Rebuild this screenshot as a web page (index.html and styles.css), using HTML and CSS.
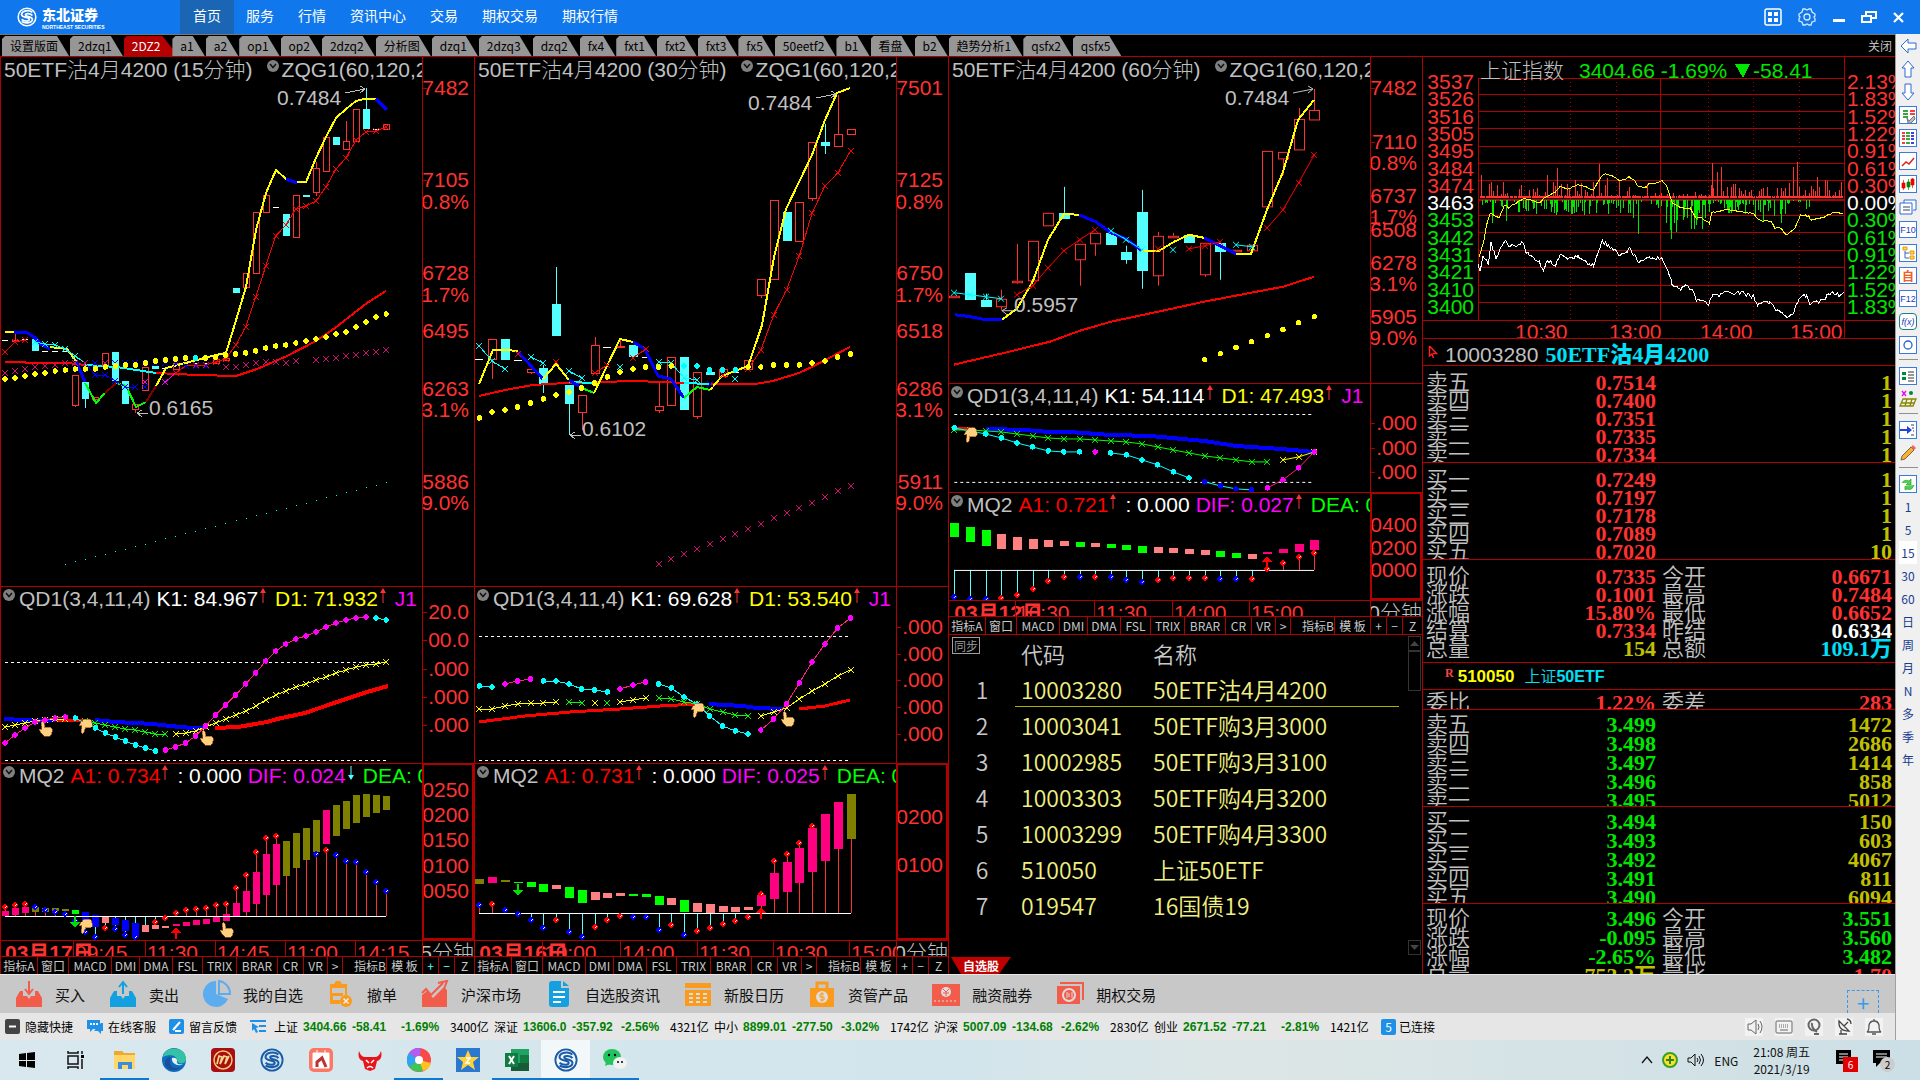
FILE: index.html
```html
<!DOCTYPE html>
<html lang="zh-CN">

<head>
    <meta charset="UTF-8">
    <meta name="viewport" content="width=device-width, initial-scale=1.0">
    <title>东北证券</title>
    <link rel="stylesheet" href="styles.css">
</head>

<body>
    <svg class="defs" aria-hidden="true">
        <symbol id="up" viewBox="0 0 6 16"><path d="M3 3v12" stroke="#ff3232"/><path d="M0 5l3-5 3 5z" fill="#ff3232"/></symbol>
        <symbol id="down" viewBox="0 0 6 16"><path d="M3 1v12" stroke="#54ffff"/><path d="M0 10l3 5 3-5z" fill="#54ffff"/></symbol>
        <symbol id="fold" viewBox="0 0 12 12"><circle cx="6" cy="6" r="6" fill="#808080"/><path d="M3 4l3 3.5L9 4" fill="none" stroke="#111" stroke-width="1.5"/></symbol>
        <symbol id="swirl" viewBox="0 0 26 26"><circle cx="13" cy="13" r="11.5" fill="none" stroke="currentColor" stroke-width="2"/><path d="M20 7C15 3 6 5 6 10c0 4 10 3 10 6 0 3-7 3-10 0M20 11c-2-3-9-3-9-1 0 3 9 2 9 6 0 5-9 6-14 3" fill="none" stroke="currentColor" stroke-width="2.200"/></symbol>
        <symbol id="hand" viewBox="0 0 14 16"><path d="M2 1.500C2.500 0 4.500 0 5 2l1 4.500 5-.5c3 1 3 6 0 9H5C3 13 1 11 0 8.500l2-.5 1 1z" fill="#ffd080" stroke="#a05a20" stroke-width=".7"/></symbol>
    </svg>

    <header class="topbar">
        <div class="brand">
            <svg width="26" height="20"><use href="#swirl"/></svg>
            <div class="brand-text"><b>东北证券</b><small>NORTHEAST SECURITIES</small></div>
        </div>
        <nav>
            <a class="active" href="#">首页</a>
            <a href="#">服务</a>
            <a href="#">行情</a>
            <a href="#">资讯中心</a>
            <a href="#">交易</a>
            <a href="#">期权交易</a>
            <a href="#">期权行情</a>
        </nav>
        <div class="window-buttons">
            <button aria-label="面板"><svg width="18" height="18"><rect x="1" y="1" width="16" height="16" rx="2" fill="none" stroke="#fff" stroke-width="1.500"/><path d="M4 4h4v4H4zM10 4h4v4h-4zM4 10h4v4H4zM10 10h4v4h-4z" fill="#fff"/></svg></button>
            <button aria-label="设置"><svg width="20" height="18"><path d="M6 1h2l2 1 2-1h2l1 3 3 2v2l-1 1 1 2v2l-3 1-1 3h-2l-2-1-2 1H6l-1-3-3-1v-2l1-2-1-1V6l3-2z" fill="none" stroke="#d7e8ff" stroke-width="1.300"/><circle cx="10" cy="9" r="3" fill="none" stroke="#d7e8ff" stroke-width="1.300"/></svg></button>
            <button aria-label="最小化"><svg width="14" height="18"><path d="M1 11h12v3H1z" fill="#fff"/></svg></button>
            <button aria-label="还原"><svg width="16" height="18"><path d="M1 8h9v6H1zM5 7V4h10v6h-4" fill="none" stroke="#fff" stroke-width="2"/></svg></button>
            <button aria-label="关闭窗口"><svg width="14" height="18"><path d="M2 5l9 9M11 5l-9 9" stroke="#fff" stroke-width="2.200"/></svg></button>
        </div>
    </header>

    <div class="desk">
        <div class="workspace">
            <div class="tabs">
                <button>设置版面</button><button>2dzq1</button><button class="current">2DZ2</button><button>a1</button><button>a2</button><button>op1</button><button>op2</button><button>2dzq2</button><button>分析图</button><button>dzq1</button><button>2dzq3</button><button>dzq2</button><button>fx4</button><button>fxt1</button><button>fxt2</button><button>fxt3</button><button>fx5</button><button>50eetf2</button><button>b1</button><button>看盘</button><button>b2</button><button>趋势分析1</button><button>qsfx2</button><button>qsfx5</button>
                <a class="close-page" href="#">关闭</a>
            </div>

            <main>
                <section class="column">
                    <div class="plots" data-chart="0">
                        <div class="panel">
                            <div class="plot">
                                <h2 class="tall"><span>50ETF沽4月4200 (15分钟)</span><svg class="fold high"><use href="#fold"/></svg><span>ZQG1(60,120,2</span></h2>
                                <svg class="draw"></svg>
                            </div>
                            <svg class="axis"></svg>
                        </div>
                        <div class="panel">
                            <div class="plot">
                                <h2><svg class="fold"><use href="#fold"/></svg><span>QD1(3,4,11,4)</span><span class="white">K1: 84.967</span><svg class="trend"><use href="#up"/></svg><span class="yellow">D1: 71.932</span><svg class="trend"><use href="#up"/></svg><span class="magenta">J1</span></h2>
                                <svg class="draw"></svg>
                            </div>
                            <svg class="axis"></svg>
                        </div>
                        <div class="panel selected">
                            <div class="plot">
                                <h2><svg class="fold"><use href="#fold"/></svg><span>MQ2</span><span class="red">A1: 0.734</span><svg class="trend"><use href="#up"/></svg><span class="white">: 0.000</span><span class="magenta">DIF: 0.024</span><svg class="trend"><use href="#down"/></svg><span class="green">DEA: 0</span></h2>
                                <svg class="draw"></svg>
                            </div>
                            <svg class="axis"></svg>
                        </div>
                    </div>
                    <div class="time"><svg class="hours"></svg><span>5分钟</span></div>
                    <div class="indicators cyan-zoom"><button>指标A</button><button>窗口</button><button>MACD</button><button>DMI</button><button>DMA</button><button>FSL</button><button>TRIX</button><button>BRAR</button><button>CR</button><button>VR</button><button>&gt;</button><button class="right">指标B</button><button>模 板</button><button class="zoom">+</button><button class="zoom">−</button><button>Z</button></div>
                </section>

                <section class="column">
                    <div class="plots" data-chart="1">
                        <div class="panel">
                            <div class="plot">
                                <h2 class="tall"><span>50ETF沽4月4200 (30分钟)</span><svg class="fold high"><use href="#fold"/></svg><span>ZQG1(60,120,2</span></h2>
                                <svg class="draw"></svg>
                            </div>
                            <svg class="axis"></svg>
                        </div>
                        <div class="panel">
                            <div class="plot">
                                <h2><svg class="fold"><use href="#fold"/></svg><span>QD1(3,4,11,4)</span><span class="white">K1: 69.628</span><svg class="trend"><use href="#up"/></svg><span class="yellow">D1: 53.540</span><svg class="trend"><use href="#up"/></svg><span class="magenta">J1</span></h2>
                                <svg class="draw"></svg>
                            </div>
                            <svg class="axis"></svg>
                        </div>
                        <div class="panel selected">
                            <div class="plot">
                                <h2><svg class="fold"><use href="#fold"/></svg><span>MQ2</span><span class="red">A1: 0.731</span><svg class="trend"><use href="#up"/></svg><span class="white">: 0.000</span><span class="magenta">DIF: 0.025</span><svg class="trend"><use href="#up"/></svg><span class="green">DEA: 0</span></h2>
                                <svg class="draw"></svg>
                            </div>
                            <svg class="axis"></svg>
                        </div>
                    </div>
                    <div class="time"><svg class="hours"></svg><span>0分钟</span></div>
                    <div class="indicators"><button>指标A</button><button>窗口</button><button>MACD</button><button>DMI</button><button>DMA</button><button>FSL</button><button>TRIX</button><button>BRAR</button><button>CR</button><button>VR</button><button>&gt;</button><button class="right">指标B</button><button>模 板</button><button class="zoom">+</button><button class="zoom">−</button><button>Z</button></div>
                </section>

                <section class="column">
                    <div class="plots short" data-chart="2">
                        <div class="panel">
                            <div class="plot">
                                <h2 class="tall"><span>50ETF沽4月4200 (60分钟)</span><svg class="fold high"><use href="#fold"/></svg><span>ZQG1(60,120,2</span></h2>
                                <svg class="draw"></svg>
                            </div>
                            <svg class="axis"></svg>
                        </div>
                        <div class="panel">
                            <div class="plot">
                                <h2><svg class="fold"><use href="#fold"/></svg><span>QD1(3,4,11,4)</span><span class="white">K1: 54.114</span><svg class="trend"><use href="#up"/></svg><span class="yellow">D1: 47.493</span><svg class="trend"><use href="#up"/></svg><span class="magenta">J1</span></h2>
                                <svg class="draw"></svg>
                            </div>
                            <svg class="axis"></svg>
                        </div>
                        <div class="panel selected">
                            <div class="plot">
                                <h2><svg class="fold"><use href="#fold"/></svg><span>MQ2</span><span class="red">A1: 0.721</span><svg class="trend"><use href="#up"/></svg><span class="white">: 0.000</span><span class="magenta">DIF: 0.027</span><svg class="trend"><use href="#up"/></svg><span class="green">DEA: 0</span></h2>
                                <svg class="draw"></svg>
                            </div>
                            <svg class="axis"></svg>
                        </div>
                    </div>
                    <div class="time"><svg class="hours"></svg><span>60分钟</span></div>
                    <div class="indicators"><button>指标A</button><button>窗口</button><button>MACD</button><button>DMI</button><button>DMA</button><button>FSL</button><button>TRIX</button><button>BRAR</button><button>CR</button><button>VR</button><button>&gt;</button><button class="right">指标B</button><button>模 板</button><button class="zoom">+</button><button class="zoom">−</button><button>Z</button></div>
                    <div class="watch">
                        <div class="watch-body">
                            <table>
                                <thead>
                                    <tr><th class="no"><button class="sync">同步</button></th><th class="code">代码</th><th>名称</th></tr>
                                </thead>
                                <tbody>
                                    <tr class="picked"><td>1</td><td>10003280</td><td>50ETF沽4月4200</td></tr>
                                    <tr><td>2</td><td>10003041</td><td>50ETF购3月3000</td></tr>
                                    <tr><td>3</td><td>10002985</td><td>50ETF购3月3100</td></tr>
                                    <tr><td>4</td><td>10003303</td><td>50ETF购4月3200</td></tr>
                                    <tr><td>5</td><td>10003299</td><td>50ETF购4月3300</td></tr>
                                    <tr><td>6</td><td>510050</td><td>上证50ETF</td></tr>
                                    <tr><td>7</td><td>019547</td><td>16国债19</td></tr>
                                </tbody>
                            </table>
                            <div class="scroll">
                                <i class="box"><svg width="9" height="5"><path d="M0 5l4.500-5L9 5z" fill="#444"/></svg></i>
                                <i class="thumb"></i>
                                <i class="box last"><svg width="9" height="5"><path d="M0 0l4.500 5L9 0z" fill="#444"/></svg></i>
                            </div>
                        </div>
                        <button class="list-tab">自选股</button>
                    </div>
                </section>

                <section class="quotes">
                    <svg class="index-chart" viewBox="1423 57 472 281" preserveAspectRatio="none"></svg>
                    <h3><svg width="10" height="14"><path d="M1.500 1v10l2.500-2 1.500 4M1.500 1l7 7.500H5" fill="none" stroke="#ff2020" stroke-width="1.500"/></svg><span>10003280</span><b>50ETF沽4月4200</b></h3>
                    <div class="block">
                        <table>
                            <tr><th>卖五</th><td class="r">0.7514</td><th></th><td class="o">1</td></tr>
                            <tr><th>卖四</th><td class="r">0.7400</td><th></th><td class="o">1</td></tr>
                            <tr><th>卖三</th><td class="r">0.7351</td><th></th><td class="o">1</td></tr>
                            <tr><th>卖二</th><td class="r">0.7335</td><th></th><td class="o">1</td></tr>
                            <tr><th>卖一</th><td class="r">0.7334</td><th></th><td class="o">1</td></tr>
                        </table>
                    </div>
                    <div class="block">
                        <table>
                            <tr><th>买一</th><td class="r">0.7249</td><th></th><td class="o">1</td></tr>
                            <tr><th>买二</th><td class="r">0.7197</td><th></th><td class="o">1</td></tr>
                            <tr><th>买三</th><td class="r">0.7178</td><th></th><td class="o">1</td></tr>
                            <tr><th>买四</th><td class="r">0.7089</td><th></th><td class="o">1</td></tr>
                            <tr><th>买五</th><td class="r">0.7020</td><th></th><td class="o">10</td></tr>
                        </table>
                    </div>
                    <div class="block">
                        <table>
                            <tr><th>现价</th><td class="r">0.7335</td><th>今开</th><td class="r">0.6671</td></tr>
                            <tr><th>涨跌</th><td class="r">0.1001</td><th>最高</th><td class="r">0.7484</td></tr>
                            <tr><th>涨幅</th><td class="r">15.80%</td><th>最低</th><td class="r">0.6652</td></tr>
                            <tr><th>结算</th><td class="r">0.7334</td><th>昨结</th><td class="w">0.6334</td></tr>
                            <tr><th>总量</th><td class="o">154</td><th>总额</th><td class="c">109.1万</td></tr>
                        </table>
                    </div>
                    <h3 class="small"><sup>R</sup><b class="code">510050</b><b>上证<strong>50ETF</strong></b></h3>
                    <div class="block loose single">
                        <table>
                            <tr><th>委比</th><td class="r">1.22%</td><th>委差</th><td class="r">283</td></tr>
                        </table>
                    </div>
                    <div class="block loose">
                        <table>
                            <tr><th>卖五</th><td class="g">3.499</td><th></th><td class="o">1472</td></tr>
                            <tr><th>卖四</th><td class="g">3.498</td><th></th><td class="o">2686</td></tr>
                            <tr><th>卖三</th><td class="g">3.497</td><th></th><td class="o">1414</td></tr>
                            <tr><th>卖二</th><td class="g">3.496</td><th></th><td class="o">858</td></tr>
                            <tr><th>卖一</th><td class="g">3.495</td><th></th><td class="o">5012</td></tr>
                        </table>
                    </div>
                    <div class="block loose">
                        <table>
                            <tr><th>买一</th><td class="g">3.494</td><th></th><td class="o">150</td></tr>
                            <tr><th>买二</th><td class="g">3.493</td><th></th><td class="o">603</td></tr>
                            <tr><th>买三</th><td class="g">3.492</td><th></th><td class="o">4067</td></tr>
                            <tr><th>买四</th><td class="g">3.491</td><th></th><td class="o">811</td></tr>
                            <tr><th>买五</th><td class="g">3.490</td><th></th><td class="o">6094</td></tr>
                        </table>
                    </div>
                    <div class="block loose">
                        <table>
                            <tr><th>现价</th><td class="g">3.496</td><th>今开</th><td class="g">3.551</td></tr>
                            <tr><th>涨跌</th><td class="g">-0.095</td><th>最高</th><td class="g">3.560</td></tr>
                            <tr><th>涨幅</th><td class="g">-2.65%</td><th>最低</th><td class="g">3.482</td></tr>
                            <tr><th>总量</th><td class="o">753.2万</td><th>量比</th><td class="r">1.70</td></tr>
                        </table>
                    </div>
                </section>
            </main>

            <div class="quickbar">
                <button><svg width="28" height="28"><path d="M5 11h3v5h4l2 3 2-3h4v-5h3l4 7v9H1v-9z" fill="#f25c4a"/><path d="M14 1v12M10 9l4 5 4-5" fill="none" stroke="#f25c4a" stroke-width="2"/></svg>买入</button>
                <button><svg width="28" height="28"><path d="M5 11h3v5h4l2 3 2-3h4v-5h3l4 7v9H1v-9z" fill="#12a0e0"/><path d="M14 14V2M10 7l4-5 4 5" fill="none" stroke="#12a0e0" stroke-width="2"/></svg>卖出</button>
                <button><svg width="28" height="28"><path d="M13 1a13 13 0 1 0 12 18L13 14z" fill="#5cacf0"/><path d="M16 1a13 13 0 0 1 11 13H16z" fill="none" stroke="#5cacf0" stroke-width="2"/></svg>我的自选</button>
                <button><svg width="28" height="28"><path d="M3 4h4l2-3h4l2 3h5v11h-2V8H5v5h11v3H6v4h7v4H3z" fill="#fb9b1e"/><circle cx="19" cy="21" r="6" fill="#fb9b1e"/><path d="M16.500 18.500l5 5m0-5l-5 5" stroke="#eee" stroke-width="1.500"/></svg>撤单</button>
                <button><svg width="28" height="28"><path d="M1 15l5-4 6 7 11-11 3 3v17H1z" fill="#f25c4a"/><path d="M1 13l4-4 5 6L22 3M17 3l9-2-3 8" fill="none" stroke="#f25c4a" stroke-width="2"/></svg>沪深市场</button>
                <button><svg width="28" height="28"><path d="M4 4q0-3 3-3h9v7h8v16q0 3-3 3H7q-3 0-3-3z" fill="#12a0e0"/><path d="M18 1l6 5h-6z" fill="#12a0e0"/><path d="M8 12h12M8 17h12M8 22h8" stroke="#fff" stroke-width="2"/></svg>自选股资讯</button>
                <button><svg width="28" height="28"><path d="M1 3h26v5H1zM1 10h26v16H1z" fill="#fb9b1e"/><path d="M5 14h4m3 0h4m3 0h4M5 18h4m3 0h4m3 0h4M5 22h4m3 0h4m3 0h4" stroke="#ddd" stroke-width="2"/></svg>新股日历</button>
                <button><svg width="28" height="28"><path d="M2 8h24v19H2z" fill="#fb9b1e"/><path d="M9 8V3h10v5" fill="none" stroke="#fb9b1e" stroke-width="3"/><circle cx="14" cy="17" r="6" fill="#ddd"/><path d="M16 14h-4v3h4v3h-4M14 12v10" fill="none" stroke="#fb9b1e"/></svg>资管产品</button>
                <button><svg width="28" height="28"><path d="M0 4h28v22H0z" fill="#f25c4a"/><path d="M2 21h24" stroke="#ddd" stroke-dasharray="2 2"/><circle cx="14" cy="12" r="5" fill="#ddd"/><path d="M11 9l3 3 3-3M14 12v4M11 13h6" fill="none" stroke="#f25c4a"/></svg>融资融券</button>
                <button><svg width="28" height="28"><rect x="1" y="6" width="23" height="18" fill="#f25c4a"/><path d="M4 3h23v17" fill="none" stroke="#f25c4a" stroke-width="2"/><circle cx="13" cy="15" r="6" fill="none" stroke="#ddd" stroke-width="2"/><path d="M11 12v6m2-5v4m3-5v6" stroke="#ddd"/></svg>期权交易</button>
                <button class="add" aria-label="添加">+</button>
            </div>

            <div class="status">
                <a href="#"><svg width="16" height="16"><rect width="15" height="15" rx="2" fill="#444"/><path d="M4 7.500h7" stroke="#fff" stroke-width="2"/></svg>隐藏快捷</a>
                <a href="#"><svg width="18" height="16"><path d="M1 1h13v9H7l-3 3v-3H1z" fill="#1e90e8"/><path d="M15 4h2v8h-2v3l-3-3H8" fill="#1e90e8"/><path d="M4 5h2m1 0h2m1 0h2" stroke="#fff" stroke-width="2"/></svg>在线客服</a>
                <a href="#"><svg width="16" height="16"><rect width="15" height="15" rx="2" fill="#1e90e8"/><path d="M4 11l7-8M6 12h6" stroke="#fff" stroke-width="2"/></svg>留言反馈</a>
                <svg class="ticker-icon" width="18" height="16"><path d="M0 2h16M9 7h7M9 12h7" stroke="#1e90e8" stroke-width="2"/><path d="M2 4l7 4-3 1 2 4-2 1-2-4-2 2z" fill="#1e90e8"/></svg>
                <p>上证<b>3404.66</b><b>-58.41</b><b>-1.69%</b><span>3400亿</span></p>
                <p>深证<b>13606.0</b><b>-357.92</b><b>-2.56%</b><span>4321亿</span></p>
                <p>中小<b>8899.01</b><b>-277.50</b><b>-3.02%</b><span>1742亿</span></p>
                <p>沪深<b>5007.09</b><b>-134.68</b><b>-2.62%</b><span>2830亿</span></p>
                <p>创业<b>2671.52</b><b>-77.21</b><b>-2.81%</b><span>1421亿</span></p>
                <span class="linked"><i>5</i>已连接</span>
                <div class="status-icons">
                    <button aria-label="声音"><svg width="18" height="18"><path d="M3 6h3l5-4v14l-5-4H3zM13 6q2 3 0 6M15 3q4 6 0 12" fill="none" stroke="#666"/></svg></button>
                    <button aria-label="键盘"><svg width="18" height="18"><rect x="1" y="3" width="16" height="12" rx="1" fill="none" stroke="#666"/><path d="M4 7h10M4 9h10" stroke="#666" stroke-dasharray="1 1"/><path d="M5 12h8" stroke="#666"/></svg></button>
                    <button aria-label="客服"><svg width="18" height="18"><circle cx="9" cy="7" r="5.500" fill="none" stroke="#666" stroke-width="2"/><path d="M7 5q-1 5 5 9M9 16h5" fill="none" stroke="#666" stroke-width="2"/></svg></button>
                    <button aria-label="卫星"><svg width="18" height="18"><path d="M4 3q-1 10 10 10zM4 16h8M6 12v4M9 8l4-4M12 1q4 1 4 5" fill="none" stroke="#444" stroke-width="1.300"/></svg></button>
                    <button aria-label="提醒"><svg width="18" height="18"><path d="M2 14q2-1 2-7 1-4 5-4t5 4q0 6 2 7zM7 16h4M9 1v2" fill="none" stroke="#555" stroke-width="1.300"/></svg></button>
                </div>
            </div>
        </div>

        <aside class="tools">
            <button><svg><path d="M9 2v4h8v6H9v4L2 9z" fill="#fff" stroke="#2a6ad8"/></svg></button>
            <button><svg><path d="M9 1l6 7h-3v9H6V8H3z" fill="#fff" stroke="#2a6ad8"/></svg></button>
            <button><svg><path d="M9 17l6-7h-3V1H6v9H3z" fill="#fff" stroke="#2a6ad8"/></svg></button>
            <button><svg class="frame"><path d="M3 4h5M3 7h5M3 10h5" stroke="#080" stroke-width="1.500"/><path d="M10 4h5M10 7h5" stroke="#e00" stroke-width="1.500"/><path d="M7 11l2 3 5-5 1 3-4 4H8z" fill="#bbb" stroke="#777"/></svg></button>
            <button><svg class="frame"><path d="M2 3h3m-3 3h3m-3 3h3m-3 4h3" stroke="#e00" stroke-width="1.500"/><path d="M6 3h4m-4 3h4m-4 3h4m-4 4h4" stroke="#080" stroke-width="1.500"/><path d="M11 3h3m-3 3h3m-3 3h3m-3 4h3" stroke="#00d" stroke-width="1.500"/></svg></button>
            <button><svg class="frame"><path d="M2 13l4-4 3 2 5-6" fill="none" stroke="#d22" stroke-width="1.500"/></svg></button>
            <button><svg class="frame"><path d="M2 7h3v5H2zM11 3h3v6h-3zM3.500 4v10M12.500 2v10" fill="#e00" stroke="#e00" stroke-width=".7"/><path d="M7 6h3v5H7zM8.500 3v11" fill="#080" stroke="#080" stroke-width=".7"/></svg></button>
            <button><svg><path d="M5 5V2h12v10h-3M1 5h12v11H1z" fill="#fff" stroke="#2a6ad8"/><path d="M4 9h7M4 12h7" stroke="#345"/></svg></button>
            <button class="framed">F10</button>
            <button><svg class="frame"><path d="M3 2h4v3H3zM10 6h4v3h-4zM10 11h4v3h-4z" fill="#ffd36a" stroke="#e29b00"/><path d="M5 6v7h4M5 8h4" fill="none" stroke="#36c"/></svg></button>
            <button class="framed orange">自</button>
            <button class="framed">F12</button>
            <button class="framed teal">f(x)</button>
            <button><svg class="frame"><circle cx="8" cy="8" r="4" fill="none" stroke="#26c" stroke-width="1.300"/></svg></button>
            <hr>
            <button><svg class="frame"><path d="M2 4h4v3H2zM2 9h4v3H2z" fill="#083"/><path d="M8 4h6M8 7h6M8 10h6M8 13h6" stroke="#333"/></svg></button>
            <button><svg><path d="M3 1l4 5m0-5L3 6" stroke="#e0e" stroke-width="1.300"/><circle cx="12" cy="3" r="2" fill="#083"/><path d="M4 9h13l-3 7H1zM3 13h13M8 9l-2 7M13 9l-2 7" fill="none" stroke="#880" stroke-width="1.300"/></svg></button>
            <hr>
            <button><svg class="frame"><path d="M0 7h7V4l5 4-5 4V9H0z" fill="#24d"/><path d="M11 3h3m-2 3h2m-1 3h1m-3 4h3" stroke="#345"/></svg></button>
            <button><svg><path d="M2 16l1-4L12 3l3 3-9 9z" fill="#f8b030" stroke="#764"/><path d="M12 3l2-2 3 3-2 2z" fill="#e66"/></svg></button>
            <hr>
            <button><svg class="frame"><path d="M2 7q2-4 7-2l2-2v6H6l2-2M14 9q-2 6-7 4l-2 1v-4" fill="#5c5" stroke="#2a2" stroke-width=".7"/></svg></button>
            <button>1</button>
            <button>5</button>
            <button class="on">15</button>
            <button>30</button>
            <button>60</button>
            <button>日</button>
            <button>周</button>
            <button>月</button>
            <button>N</button>
            <button>多</button>
            <button>季</button>
            <button>年</button>
        </aside>
    </div>

    <footer class="taskbar">
        <div class="apps">
            <button aria-label="开始"><svg viewBox="0 0 24 24"><path d="M4 6l7-1v7H4zM12 5l8-1v8h-8zM4 13h7v6l-7-1zM12 13h8v7l-8-1z"/></svg></button>
            <button aria-label="任务视图"><svg viewBox="0 0 24 24"><path d="M4 8h10v8H4zM4 3v2h10V3M4 21v-2h10v2M18 3v3M18 11v10" fill="none" stroke="#111" stroke-width="1.500"/><path d="M17 7h3v3h-3z"/></svg></button>
            <button class="open" aria-label="文件"><svg viewBox="0 0 24 24"><path d="M1 3h8l2 2h11v15H1z" fill="#f0a830"/><path d="M1 7h21v14H1z" fill="#ffd768"/><path d="M5 21v-7h14v7h-4v-4H9v4z" fill="#3b8ede"/></svg></button>
            <button aria-label="Edge"><svg viewBox="0 0 24 24"><circle cx="12" cy="12" r="12" fill="#0d6ebd"/><path d="M1 9C3-3 24-2 24 11c0 6-8 5-9 2 1-5-7-8-14-4z" fill="#35c1a5"/><path d="M8 12c-1 6 4 10 11 7-6 6-16 3-16-4 0-3 2-6 6-6z" fill="#1a4f9f"/><path d="M10 10q5-1 5 3c-1 3 3 4 6 3-4 3-12 0-11-6z" fill="#e5f1f4"/></svg></button>
            <button aria-label="行情"><svg viewBox="0 0 24 24"><rect width="24" height="24" rx="4" fill="#a80e14"/><circle cx="12" cy="12" r="9" fill="none" stroke="#f4c86a" stroke-width="1.500"/><path d="M6 16l2-8 3 1-2 7 4-8 3 1-2 7 4-8" fill="none" stroke="#f7d68a" stroke-width="1.700"/></svg></button>
            <button class="blue" aria-label="东北证券"><svg viewBox="0 0 26 26"><use href="#swirl"/></svg></button>
            <button aria-label="工具"><svg viewBox="0 0 24 24"><rect width="24" height="24" rx="5" fill="#fa7864"/><path d="M4 5h16v15H4zM8 2v4M16 2v4" fill="#fff" stroke="#fff"/><path d="M8 19v-5l5-4 4 9" fill="none" stroke="#b33" stroke-width="3"/></svg></button>
            <button aria-label="牛牛"><svg viewBox="0 0 24 24"><path d="M1 3q2 6 6 6h10q4 0 6-6 2 8-4 10l-2 8-5 2-5-2-2-8Q-1 11 1 3z" fill="#e8141c"/><path d="M8 12l3 3M16 12l-3 3M9 20q3-3 6 0" stroke="#fff" fill="none" stroke-width="1.500"/></svg></button>
            <button class="open" aria-label="浏览器"><svg viewBox="0 0 24 24"><circle cx="12" cy="12" r="12" fill="#f84a4a"/><path d="M12 12L2 5a12 12 0 0 1 12-5z" fill="#b35cf0"/><path d="M12 12L2 19A12 12 0 0 1 2 5z" fill="#2ca6f4"/><path d="M12 12l4 11A12 12 0 0 1 2 19z" fill="#3cc65a"/><path d="M12 12l12 3a12 12 0 0 1-8 8z" fill="#ffc21e"/><circle cx="12" cy="12" r="4" fill="#fff"/></svg></button>
            <button aria-label="自选"><svg viewBox="0 0 24 24"><path d="M0 0h24v24H0z" fill="#2a78d0"/><path d="M12 2l3 7h8l-6 5 2 8-7-5-7 5 2-8-6-5h8z" fill="#ffd23c"/><path d="M10 10h4l-4 5h4" fill="none" stroke="#fff" stroke-width="1.500"/></svg></button>
            <button class="open" aria-label="Excel"><svg viewBox="0 0 24 24"><path d="M6 1h18v22H6z" fill="#21a366"/><path d="M15 7h9v8h-9z" fill="#107c41"/><path d="M6 15h18v8H6z" fill="#185c37"/><path d="M0 5h13v14H0z" fill="#107c41"/><path d="M4 8l5 8M9 8l-5 8" stroke="#fff" stroke-width="2"/></svg></button>
            <button class="blue active" aria-label="东北证券交易"><svg viewBox="0 0 26 26"><use href="#swirl"/></svg></button>
            <button class="open" aria-label="微信"><svg viewBox="0 0 24 24"><ellipse cx="9" cy="9" rx="9" ry="8" fill="#22c35e"/><path d="M3 14l-1 4 5-2z" fill="#22c35e"/><ellipse cx="17" cy="15" rx="7" ry="6" fill="#f2f2f2"/><circle cx="6" cy="7" r="1.200"/><circle cx="12" cy="7" r="1.200"/><circle cx="15" cy="14" r="1"/><circle cx="19" cy="14" r="1"/></svg></button>
        </div>
        <div class="tray">
            <svg width="12" height="12"><path d="M1 9l5-6 5 6" fill="none" stroke="#111" stroke-width="1.300"/></svg>
            <svg width="16" height="16"><circle cx="8" cy="8" r="7" fill="#ffde2a" stroke="#38a02a" stroke-width="2"/><path d="M8 4v8M4 8h8" stroke="#278a1c" stroke-width="2"/></svg>
            <svg width="18" height="16"><path d="M1 6h3l4-4v12l-4-4H1zM10 6q2 2 0 4M12 4q3 4 0 8M14 2q5 6 0 12" fill="none" stroke="#111"/></svg>
            <span>ENG</span>
            <time>21:08 周五<br>2021/3/19</time>
            <div class="note"><svg width="22" height="22"><path d="M1 1h15v14H1z"/><path d="M4 5h9M4 8h9M4 11h9" stroke="#fff"/></svg><em>6</em></div>
            <div class="note gray"><svg width="22" height="22"><path d="M1 1h17v13H8l-4 4v-4H1z"/><path d="M4 5h11M4 8h11" stroke="#fff"/></svg><em>2</em></div>
        </div>
    </footer>

    <script src="charts.js"></script>
</body>

</html>
```
FILE: styles.css
```css
* {
    box-sizing: border-box;
}

body {
    margin: 0;
    height: 100vh;
    display: flex;
    flex-direction: column;
    overflow: hidden;
    background: #000;
    font-family: "Noto Sans CJK SC", sans-serif;
    font-size: 12px;
}

button {
    padding: 0;
    border: 0;
    background: none;
    color: inherit;
    font: inherit;
    white-space: nowrap;
}

a {
    color: inherit;
    text-decoration: none;
}

svg {
    display: block;
}

.defs {
    position: absolute;
    width: 0;
    height: 0;
}

/* title bar */

.topbar {
    height: 34px;
    flex: none;
    display: flex;
    align-items: stretch;
    background: #1078ec;
    color: #fff;
}

.brand {
    width: 180px;
    padding-left: 14px;
    display: flex;
    align-items: center;
    gap: 2px;
}

.brand b {
    display: block;
    font-size: 14px;
    font-weight: 900;
    line-height: 20px;
}

.brand small {
    display: block;
    font: bold 5px/6px "Liberation Sans", sans-serif;
}

.topbar nav {
    display: flex;
    flex: 1;
}

.topbar nav a {
    padding: 0 12px;
    font-size: 14px;
    line-height: 30px;
}

.topbar nav .active {
    padding: 0 13px;
    background: #1a66b4;
}

.window-buttons {
    display: flex;
    align-items: center;
    gap: 15px;
    padding-right: 14px;
}

/* workspace */

.desk {
    flex: 1;
    min-height: 0;
    display: flex;
}

.workspace {
    flex: 1;
    min-width: 0;
    display: flex;
    flex-direction: column;
    border-top: 1px solid #777;
}

.tabs {
    height: 21px;
    flex: none;
    display: flex;
    align-items: flex-end;
    gap: 1px;
    padding-left: 2px;
}

.tabs button {
    height: 20px;
    padding: 0 11px 0 8px;
    background: #969696;
    color: #000;
    line-height: 18px;
    clip-path: polygon(0 3px, 3px 0, calc(100% - 12px) 0, 100% 100%, 0 100%);
}

.tabs .current {
    padding-right: 18px;
    margin-right: -7px;
    background: #b40000;
    color: #fff;
    clip-path: polygon(0 3px, 3px 0, calc(100% - 16px) 0, 100% 100%, 0 100%);
}

.close-page {
    margin-left: auto;
    padding-right: 3px;
    color: #c0c0c0;
    line-height: 20px;
}

main {
    flex: 1;
    min-height: 0;
    display: grid;
    grid-template-columns: repeat(3, minmax(0, 1fr)) 473px;
    grid-template-rows: minmax(0, 1fr);
}

.column {
    display: flex;
    flex-direction: column;
    min-height: 0;
    min-width: 0;
    border-left: 1px solid #b00000;
}

.plots {
    flex: 1;
    min-height: 0;
    display: grid;
    grid-template-columns: minmax(0, 1fr);
    grid-template-rows: minmax(0, 530fr) minmax(0, 177fr) minmax(0, 177fr);
}

.plots.short {
    flex: 545;
    grid-template-rows: minmax(0, 327fr) minmax(0, 109fr) minmax(0, 109fr);
}

.panel {
    display: flex;
    min-height: 0;
    border-top: 1px solid #b00000;
}

.plot {
    flex: 1;
    min-width: 0;
    display: flex;
    flex-direction: column;
}

.draw {
    width: 100%;
    flex: 1 1 0;
    min-height: 0;
}

.axis {
    width: 52px;
    height: 100%;
    flex: none;
    border-left: 1px solid #b00000;
}

.selected .axis {
    border: solid #b00000;
    border-width: 1px 2px 2px;
}

h2 {
    margin: 0;
    height: 26px;
    flex: none;
    display: flex;
    align-items: center;
    gap: 6px;
    padding: 0 0 2px 2px;
    overflow: hidden;
    color: #c0c0c0;
    font: 21px/24px "Liberation Sans", "Noto Sans CJK SC", sans-serif;
    white-space: nowrap;
}

h2 .fold {
    width: 12px;
    height: 12px;
    flex: none;
    margin: 0 -2px 8px 0;
}

h2 .trend {
    width: 6px;
    height: 16px;
    flex: none;
    margin: 0 3px 6px -4px;
}

h2.tall {
    padding: 0 0 0 3px;
    gap: 5px;
    font-weight: 300;
}

h2.tall .fold {
    margin-left: 9px;
}

.white { color: #fff; }
.yellow { color: #ff0; }
.magenta { color: #f0f; }
.red { color: #f00; }
.green { color: #0f0; }

.time {
    height: 16px;
    flex: none;
    display: flex;
    border-top: 1px solid #b00000;
}

.hours {
    flex: 1;
    min-width: 0;
    height: 100%;
}

.time span {
    width: 52px;
    flex: none;
    overflow: hidden;
    display: flex;
    justify-content: flex-end;
    border-left: 1px solid #b00000;
    color: #c0c0c0;
    font: 300 21px/24px "Liberation Sans", "Noto Sans CJK SC", sans-serif;
    white-space: nowrap;
}

.indicators {
    height: 18px;
    flex: none;
    display: grid;
    grid-template-columns: 37px 31px 43px 28px 33px 30px 34px 41px 26px 24px 15px 1fr 36px 16px 16px 19px;
    border-top: 1px solid #b00000;
    color: #c8c8c8;
    line-height: 16px;
}

.indicators button {
    min-width: 0;
    border-right: 1px solid #b00000;
}

.indicators button:last-child {
    border-right: 0;
}

.indicators .right {
    text-align: right;
}

.cyan-zoom .zoom {
    color: #54ffff;
}

/* watch list */

.watch {
    flex: 339;
    min-height: 0;
    display: flex;
    flex-direction: column;
    border-top: 1px solid #b00000;
}

.watch-body {
    flex: 1;
    min-height: 0;
    display: flex;
    justify-content: space-between;
    align-items: flex-start;
    overflow: hidden;
}

.watch table {
    width: 450px;
    table-layout: fixed;
    border-collapse: separate;
    border-spacing: 0;
    color: #f0f080;
    font-size: 23px;
    line-height: 30px;
}

.watch th,
.watch td {
    height: 36px;
    padding: 0 0 0 6px;
    text-align: left;
    font-weight: 350;
}

.watch th {
    color: #c8c8c8;
    font-size: 22px;
}

.watch td:first-child {
    padding: 0;
    color: #c8c8c8;
    text-align: center;
}

.watch .no {
    width: 66px;
    padding: 2px 0 0 3px;
    vertical-align: top;
    line-height: 16px;
}

.watch .code {
    width: 132px;
}

.picked td + td {
    border-bottom: 1px solid #b0b000;
}

.sync {
    display: block;
    height: 17px;
    padding: 0 1px;
    border: 1px solid #a0a0a0;
    color: #a0a0a0;
    font-size: 12px;
    line-height: 14px;
}

.scroll {
    width: 13px;
    align-self: stretch;
    display: flex;
    flex-direction: column;
    margin: 1px 1px 2px 0;
}

.scroll i {
    display: flex;
    align-items: center;
    justify-content: center;
    border: 1px solid #333;
}

.scroll .box {
    height: 15px;
}

.scroll .thumb {
    height: 40px;
}

.scroll .last {
    margin-top: auto;
}

.list-tab {
    width: 60px;
    height: 17px;
    flex: none;
    margin-left: 2px;
    background: #c00000;
    color: #fff;
    font-weight: bold;
    line-height: 15px;
    clip-path: polygon(0 0, 100% 0, calc(100% - 12px) 100%, 10px 100%);
}

/* quotes */

.quotes {
    display: grid;
    grid-template-columns: minmax(0, 1fr);
    grid-template-rows: 282fr 27fr 97fr 97fr 103fr 27fr 20fr 97fr 97fr 71fr;
    min-height: 0;
    border-left: 1px solid #b00000;
    font-family: "Liberation Serif", "Noto Sans CJK SC", serif;
}

.quotes > * {
    min-height: 0;
    overflow: hidden;
    border-top: 1px solid #b00000;
}

.index-chart {
    width: 100%;
    height: 100%;
}

h3 {
    margin: 0;
    display: flex;
    align-items: center;
    gap: 7px;
    padding: 6px 0 0 5px;
    color: #00e0f8;
    font-size: 22px;
    line-height: 20px;
}

h3 span {
    color: #c0c0c0;
    font: 21px/20px "Liberation Sans", sans-serif;
}

h3 svg {
    margin-bottom: 6px;
    flex: none;
}

h3.small {
    gap: 4px;
    padding: 2px 0 0 22px;
    font: 16px/20px "Liberation Sans", "Noto Sans CJK SC", sans-serif;
}

h3.small b {
    font-weight: 350;
}

h3.small strong {
    font-weight: bold;
}

h3.small .code {
    margin-right: 6px;
    color: #ff0;
    font-size: 17px;
    font-weight: bold;
}

h3 sup {
    margin-bottom: 8px;
    color: #ff4040;
    font: bold 12px/12px "Liberation Serif", serif;
}

.block table {
    width: 100%;
    margin-top: 8px;
    table-layout: fixed;
    border-collapse: collapse;
    font-size: 22px;
    line-height: 18px;
}

.block.loose table {
    margin-top: 5px;
    line-height: 19px;
}

.block.single table {
    margin-top: 3px;
}

.block th,
.block td {
    height: 18px;
    padding: 0;
    white-space: nowrap;
}

.block.loose th,
.block.loose td {
    height: 19px;
}

.block th {
    width: 71px;
    padding-left: 3px;
    color: #c0c0c0;
    font-weight: 350;
    text-align: left;
}

.block th + td + th {
    padding-left: 6px;
}

.block td {
    font-weight: bold;
    text-align: right;
}

.block td:last-child {
    padding-right: 3px;
}

.block td:nth-child(2) {
    width: 162px;
}

.r { color: #ff3232; }
.g { color: #00e600; }
.o { color: #c0c000; }
.c { color: #00e0f8; }
.w { color: #fff; }

/* bottom bars */

.quickbar {
    height: 39px;
    flex: none;
    display: flex;
    align-items: center;
    gap: 24px;
    padding-left: 15px;
    border-top: 1px solid #e8e8e8;
    background: #c8c8c8;
    color: #111;
}

.quickbar button {
    display: flex;
    align-items: center;
    gap: 12px;
    font-size: 15px;
}

.quickbar .add {
    width: 32px;
    height: 23px;
    margin: auto 16px 0 auto;
    justify-content: center;
    border: 1px dashed #3a9ae8;
    border-bottom: 0;
    color: #3a9ae8;
    font-size: 22px;
}

.status {
    height: 27px;
    flex: none;
    display: flex;
    align-items: center;
    padding-left: 5px;
    background: #e6e6e6;
    color: #000;
    white-space: nowrap;
}

.status a {
    display: flex;
    align-items: center;
    gap: 4px;
    margin-right: 13px;
}

.ticker-icon {
    margin-right: 6px;
}

.status p {
    width: 220px;
    margin: 0;
    display: flex;
    gap: 5px;
}

.status b {
    min-width: 44px;
    color: #008000;
    font: bold 12px/18px "Liberation Sans", sans-serif;
}

.linked {
    display: flex;
    align-items: center;
    gap: 3px;
    margin-left: 7px;
}

.linked i {
    width: 15px;
    height: 16px;
    border-radius: 2px;
    background: #1e90e8;
    color: #fff;
    font-style: normal;
    line-height: 16px;
    text-align: center;
}

.status-icons {
    display: flex;
    gap: 12px;
    margin: 0 12px 0 auto;
}

.status-icons button {
    background: #f2f2f2;
}

.tools {
    width: 25px;
    flex: none;
    display: flex;
    flex-direction: column;
    align-items: center;
    border-left: 1px solid #a0a0a0;
    background: #f0f0f0;
    color: #1a3c90;
}

.tools button {
    width: 18px;
    height: 23px;
    flex: none;
    display: flex;
    align-items: center;
    justify-content: center;
}

.tools svg {
    width: 18px;
    height: 18px;
}

.tools .frame {
    width: 16px;
    height: 16px;
    overflow: hidden;
    outline: 1px solid #3a7ae0;
    background: #fff;
}

.tools .framed {
    width: 16px;
    height: 15px;
    margin: 4px 0;
    outline: 1px solid #3a7ae0;
    background: #fff;
    color: #1a3cc0;
    font: 9px "Liberation Sans", "Noto Sans CJK SC", sans-serif;
}

.tools .orange {
    color: #f06020;
    font-size: 12px;
    font-weight: bold;
}

.tools .teal {
    outline-color: #188080;
    border-radius: 3px;
    font-style: italic;
}

.tools .on {
    background: #fff;
}

.tools hr {
    width: 19px;
    height: 1px;
    flex: none;
    margin: 3px 0 4px;
    border: 0;
    background: #909090;
}

/* taskbar */

.taskbar {
    height: 40px;
    flex: none;
    display: flex;
    justify-content: space-between;
    background: linear-gradient(90deg, #d8e8ee, #d2e5ec 50%, #dde6e6 65%, #ccdfe6);
    color: #111;
}

.apps {
    display: flex;
    padding-left: 2px;
}

.apps button {
    width: 49px;
    display: flex;
    align-items: center;
    justify-content: center;
    border: solid transparent;
    border-width: 2px 0;
}

.apps svg {
    width: 24px;
    height: 24px;
}

.apps .open {
    border-bottom-color: #0a78d4;
}

.apps .blue {
    color: #1a5ca8;
}

.apps .active {
    border-color: #f2f7fa #f2f7fa #0a78d4;
    background: #f2f7fa;
}

.tray {
    display: flex;
    align-items: center;
    gap: 9px;
    padding-right: 20px;
}

.tray time {
    margin: 0 16px 0 6px;
    line-height: 17px;
    text-align: center;
}

.note {
    position: relative;
    margin-right: 6px;
}

.note em {
    position: absolute;
    left: 8px;
    top: 8px;
    width: 15px;
    height: 15px;
    background: #e00000;
    color: #fff;
    font-size: 10px;
    font-style: normal;
    line-height: 15px;
    text-align: center;
}

.note.gray em {
    border-radius: 8px;
    background: #ccc;
    color: #000;
}
```
FILE: charts.js
```js
const COLORS = {
    y: '#ffff00', r: '#ff0000', b: '#0000ff', c: '#00ffff', g: '#00ff00', m: '#ff00ff',
    d: '#800000', p: '#ff0080', o: '#808000', s: '#ff8080'
};
const RED = '#ff3232', CYAN = '#54ffff', LINE = '#b00000';
const FONT = 'font-family="Liberation Sans, Noto Sans CJK SC, sans-serif" font-size="21"';

const charts = [
    {
        left: 1, first: 5, step: 10.03, body: 7, bar: 7,
        panels: [[56, 530], [586, 177], [763, 177]],
        // index, kind (u up, d down, f flat), top, bottom, high, low
        candles: ['0 f 340', '1 u 340 341 334 343', '2 f 339', '3 d 339 351', '4 f 351', '5 f 351', '6 f 351',
            '7 u 375 405 375 407', '8 d 382 399 382 408', '9 u 397 399', '10 u 353 365', '11 d 352 381', '12 d 381 404',
            '13 u 404 409 404 413', '14 u 367 390', '15 d 366 369', '16 f 368', '17 u 363 369', '18 f 363', '19 f 363',
            '20 f 363', '21 u 359 363', '22 u 358 360', '23 d 288 293', '24 u 273 287', '25 u 212 273', '26 u 195 212',
            '27 f 207', '28 d 214 236', '29 u 195 237', '30 d 195 197', '31 u 168 192 162 196', '32 u 137 171',
            '33 d 137 145', '34 u 141 149 121 149', '35 u 109 141', '36 d 109 129 88 129', '37 f 129', '38 u 124 129'],
        lines: [
            ['r', 2, '5,362 25,362 26,363 67,363 85,365'], ['c', 2, '85,365 117,367 156,373'],
            ['r', 2, '156,373 197,375 236,376 257,369 287,356 316,341 335,328 367,303 386,291'],
            ['y', 2, '5,332 14,332'], ['b', 3, '14,332 26,332 34,337 42,345 50,349'], ['y', 2, '50,347 58,348 67,349 76,361'],
            ['b', 3, '76,361 85,382'], ['g', 2, '85,383 96,403 105,393'], ['d', 2, '105,393 116,383'],
            ['g', 2, '116,383 126,386 136,407 146,402'], ['d', 2, '146,402 156,386'],
            ['y', 2, '156,386 166,368 193,361 216,355 226,353 237,317 246,287 256,230 266,193 276,170 286,179'],
            ['b', 3, '286,179 297,183'], ['y', 2, '297,182 306,182 316,158 326,137 336,118 346,109 356,101 364,99 376,99'],
            ['b', 3, '376,99 387,110']
        ],
        crosses: [
            ['r', 0, '352 342 340'], ['c', 3, '342 344 345 349 356 363'], ['b', 8, '363 375 375 381 387 387'],
            ['m', 16, '382 373'], ['r', 17, '373 366 365 365 362 359 345 327 297 266 236 225 209 206 201 187 169 158 140 132 131 127'],
            ['b', 14, '363'], ['m', 14, '382']
        ],
        loose: [['#d01070', 0, '373 371 369 367 366 365 363 363 363 363 363 363'],
            ['#d01070', 22, '367 367 365 363 362 362 363 361'], ['#d01070', 31, '360 359 358 356 355 353 352 350'],
            ['#0000ff', 9, '363 375 363 363 363 387 363 363 364 366 366 366']],
        dots: '379 378 376 374 373 371 370 369 369 369 367 366 365 365 363 361 360 359 358 c358 358 357 355 354 353 351 348 346 345 343 341 339 337 334 332 327 322 317 314',
        dotsFrom: 0,
        specks: [65, 564, 386, 482],
        notes: [['0.7484', 277, 105, '345,93 365,89'], ['0.6165', 149, 415, '148,413 137,413']],
        priceAxis: [[88, '7482'], [180, '7105'], [202, '0.8%'], [273, '6728'], [295, '1.7%'], [331, '6495'], [389, '6263'], [410, '3.1%'], [482, '5886'], [503, '9.0%']],
        bounds: [662, 760],
        bands: [
            ['b', 4, '4,719 23,720 43,721 55,720'], ['r', 3, '57,721 83,720'], ['b', 4, '95,720 115,722 153,724 170,726 192,728 203,728'],
            ['r', 4, '215,728 238,727 267,722 277,719 305,713 337,702 367,692 388,686']
        ],
        kd: [['y', 0, '727 725 723 721 720 719 719'], ['g', 8, '721 723 725 727 729 730 732 734 734'],
            ['y', 17, '734 733 731 727 723 719 715 711 706 700 695 691 687 684 680 677 673 670 667 665 664 662']],
        j: [['m', 0, '743 735 728 722 720 718 717'], ['c', 7, '718 723 728 733 737 741 745 748 751'],
            ['m', 16, '750 747 743 736 726 715 705 695 684 673 661 651 644 639 636 632 627 623 620 618 617'], ['c', 37, '618 620']],
        hands: [[39, 721, 0], [79, 720, 1], [200, 730, 0], [79, 920, 1], [220, 922, 0]],
        kdAxis: [[612, '20.0'], [640, '00.0'], [669, '.000'], [697, '.000'], [725, '.000']],
        zero: 916,
        bars: 'p911,916 p908,915 p907,913 o907,912 o908,912 o908,911 o909,911 g910,914 b912,921 b915,927 s917,923 b918,925 b920,931 b923,937 s925,932 s925,929 s926,928 p924,926 p922,926 p920,925 p919,924 p916,922 p914,921 p903,917 p891,912 p872,904 p854,895 p844,885 o841,876 o833,868 o828,860 o820,852 p810,844 o805,836 o801,829 o795,823 o794,817 o795,813 o796,810',
        stems: 'r907 r905 r904 b907 b910 b912 b914 b921 b932 b937 r928 b929 b935 b937 x926 r922 r918 r913 r910 r909 r908 r905 r904 r888 r875 r852 r838 r836 x876 x868 x860 b854 r850 b855 b861 b862 b872 b882 b891',
        signals: [['u', 17, 927], ['d', 7, 916]],
        barAxis: [[790, '0250'], [815, '0200'], [840, '0150'], [866, '0100'], [891, '0050']],
        timeTop: 941, date: '03月17日',
        hours: [[75, '09:45'], [147, '11:30'], [217, '14:45'], [287, '11:00'], [357, '14:15']]
    },
    {
        left: 475, first: 479.3, step: 12.8, body: 9, bar: 9,
        panels: [[56, 530], [586, 177], [763, 177]],
        candles: ['0 f 359', '1 u 339 359 339 379', '2 d 339 360', '3 f 360', '4 u 369 372 367 374', '5 d 368 384 365 393',
            '6 d 304 336 267 336', '7 d 385 404 385 435', '8 u 395 412 395 430', '9 u 345 373 337 373', '10 f 347',
            '11 u 346 347 340 347', '12 d 345 357', '13 f 357', '14 u 406 410 383 413', '15 u 357 405', '16 d 357 410',
            '17 u 372 416 372 419', '18 d 372 375', '19 u 369 376', '20 f 372', '21 u 360 369', '22 u 279 295 279 298',
            '23 u 200 279', '24 d 212 241', '25 u 202 241', '26 u 142 198 142 201', '27 d 142 146 124 154',
            '28 u 134 146 95 146', '29 u 129 134'],
        lines: [
            ['r', 2, '479,396 505,390 533,385 565,383 594,383 600,382 635,381 684,383'], ['c', 2, '569,382 594,383'], ['c', 2, '684,383 709,384'],
            ['r', 2, '709,384 755,384 773,381 799,373 812,367 831,357 850,347'],
            ['y', 2, '479,384 493,350 505,350 518,351'], ['b', 3, '518,352 543,379'], ['y', 2, '543,379 556,364 569,380'],
            ['b', 3, '569,380 582,388'], ['g', 2, '582,388 594,393'], ['y', 2, '594,393 607,366 620,339 633,342'],
            ['b', 3, '633,342 645,349 658,376 671,379 684,398'], ['g', 2, '684,398 697,387 710,390'],
            ['y', 2, '710,390 722,376 748,366 757,340 762,325 774,257 786,209 800,180 812,155 825,120 837,93 850,88']
        ],
        crosses: [
            ['c', 0, '346 361 369'], ['r', 3, '354'], ['c', 4, '357 363'], ['r', 6, '362'], ['c', 7, '371 378'], ['r', 9, '373 365'],
            ['c', 11, '367'], ['r', 12, '358 349'], ['c', 14, '362 363 378 380'], ['b', 18, '384'], ['r', 19, '375'], ['c', 20, '379'],
            ['r', 21, '369 350 315 290 256 213 186 173 151']
        ],
        loose: [['#d01070', 14, '564 559 554 549 544 539 534 529 524 518 513 508 503 497 491 486']],
        dots: '418 412 410 407 403 399 395 392 388 383 377 372 369 367 367 366 c366 c366 c370 c370 c370 367 367 365 365 365 363 361 357 354',
        dotsFrom: 0,
        notes: [['0.7484', 748, 110, '816,98 836,94'], ['0.6102', 582, 436, '581,435 570,435']],
        priceAxis: [[88, '7501'], [180, '7125'], [202, '0.8%'], [273, '6750'], [295, '1.7%'], [331, '6518'], [389, '6286'], [410, '3.1%'], [482, '5911'], [503, '9.0%']],
        bounds: [636, 760],
        bands: [
            ['r', 3, '479,722 525,716 570,712 620,709 660,706 697,704'], ['b', 4, '709,704 742,706 757,708 783,709'],
            ['r', 3, '799,709 825,706 850,700']
        ],
        kd: [['y', 0, '709 709 706 704 703 703 702'], ['g', 7, '702 703'], ['y', 9, '703'], ['g', 10, '703'], ['y', 11, '702 700 698'],
            ['g', 14, '698 699 702 704 709 712 715 716'], ['y', 22, '716 712 708 699 691 684 676 670']],
        j: [['c', 0, '686 687'], ['m', 2, '684 681 679'], ['c', 5, '681 681 684 689 690 692'], ['m', 11, '689 685 682'],
            ['c', 14, '684 688 697 704 716 726 731 734'], ['m', 22, '730 719 704 683 662 644 628 618']],
        hands: [[691, 704, 1], [781, 711, 0]],
        kdAxis: [[627, '.000'], [654, '.000'], [680, '.000'], [707, '.000'], [734, '.000']],
        zero: 913,
        bars: 'o879,884 p877,883 o880,882 g882,883 g882,887 g884,892 s885,889 g887,898 g890,903 s892,900 s893,898 s893,896 g894,896 g894,897 g896,905 s898,905 g900,912 s903,912 s904,913 s906,912 s907,912 s907,910 p895,906 p873,899 p862,892 p848,883 p828,872 p814,861 p802,849 o794,839',
        stems: 'b905 r904 b910 b914 b920 b928 r920 b932 b937 r927 r920 r916 b917 b917 b930 r925 b935 r931 r928 r924 r921 r917 r894 r861 r854 r843 r826 x861 x849 x839',
        signals: [['u', 22, 907], ['d', 3, 884]],
        barAxis: [[817, '0200'], [865, '0100']],
        timeTop: 941, date: '03月16日',
        hours: [[544, '10:00'], [622, '14:00'], [699, '11:30'], [775, '10:30'], [851, '15:00']]
    },
    {
        left: 949, first: 954.3, step: 15.65, body: 11, bar: 9,
        panels: [[56, 327], [383, 109], [492, 109]],
        candles: ['0 u 296 298', '1 d 273 300', '2 d 300 307 294 307', '3 u 299 307 290 311', '4 u 281 283 244 284', '5 u 241 281',
            '6 u 213 226', '7 d 213 219 187 219', '8 u 244 260 244 286', '9 u 233 244 233 256', '10 d 233 245', '11 d 252 260 246 264',
            '12 d 212 271 190 289', '13 u 236 276 232 286', '14 u 236 238 233 238', '15 d 235 243', '16 u 243 275 243 277',
            '17 d 243 252 243 280', '18 u 250 252', '19 u 245 251', '20 u 151 207', '21 u 152 159 152 175', '22 u 119 150 108 150',
            '23 u 110 120 89 120'],
        lines: [
            ['r', 2, '954,365 975,360 1001,354 1050,342 1080,331 1111,322 1158,312 1204,302 1251,293 1283,287 1314,277'],
            ['b', 3, '955,315 970,317 986,320 1002,320'], ['y', 2, '1002,320 1017,309 1033,281 1048,240 1064,214 1079,215'],
            ['b', 3, '1079,215 1096,222 1111,233 1126,239 1142,251'], ['y', 2, '1142,251 1159,251 1174,242 1189,235 1204,238'],
            ['b', 3, '1204,238 1220,246 1236,254'], ['y', 2, '1236,254 1251,254 1267,210 1283,172 1298,120 1314,100']
        ],
        crosses: [
            ['c', 0, '293 295 297 299'], ['r', 4, '295 286 268 251 240 230'], ['c', 10, '231 240 250'], ['r', 13, '249'], ['c', 14, '250'],
            ['r', 15, '249 246 242'], ['c', 18, '245 247'], ['r', 20, '228 210 183 155']
        ],
        loose: [],
        dots: '360 354 348 342 336 330 323 317',
        dotsFrom: 16,
        notes: [['0.7484', 1225, 105, '1293,93 1313,89'], ['0.5957', 1014, 312, '1013,311 1002,311']],
        priceAxis: [[88, '7482'], [142, '7110'], [163, '0.8%'], [196, '6737'], [217, '1.7%'], [230, '6508'], [263, '6278'], [284, '3.1%'], [317, '5905'], [338, '9.0%']],
        bounds: [414, 482],
        bands: [['r', 3, '954,428 970,429'], ['b', 4, '986,429 1025,430 1048,432 1070,432 1110,435 1150,436 1204,441 1236,446 1280,449 1314,452']],
        kd: [['g', 0, '430 430 431 432 434 436 438 439 439 440 441 442 444 447 450 453 456 458 460 462 462'], ['y', 21, '460 457 452']],
        j: [['c', 0, '428 431 434 438 443 447 451 452 452'], ['m', 9, '452'], ['c', 10, '453 455 460 465 472 478'],
            ['b', 16, '482 486 489 490'], ['m', 20, '488 480 468 452']],
        hands: [[964, 429, 1]],
        kdAxis: [[423, '.000'], [448, '.000'], [472, '.000']],
        zero: 570,
        bars: 'g523,537 g527,542 g530,546 s534,549 s537,550 s539,549 s540,547 s541,546 g542,547 s543,547 g544,548 g545,550 g546,553 s547,553 s548,553 s549,554 s550,555 g551,557 g553,558 s554,559 p552,554 p549,553 p544,552 p540,550',
        stems: 'b597 b599 b599 r598 r595 r589 r581 r577 b577 r577 b577 b580 b582 r580 r578 r578 r578 b579 b579 r579 r569 r563 r557 r553',
        signals: [['u', 20, 556]],
        barAxis: [[525, '0400'], [548, '0200'], [570, '0000']],
        timeTop: 602, date: '03月12日',
        hours: [[1017, '10:30'], [1096, '11:30'], [1174, '14:00'], [1251, '15:00']]
    }
];

function polyline(points, color, width, extra) {
    return `<polyline points="${points}" fill="none" stroke="${color}" stroke-width="${width}" ${extra || ''}/>`;
}

function cross(x, y, color) {
    return `<path d="M${x - 3} ${y - 3}l6 6m0 -6l-6 6" stroke="${color}" fill="none"/>`;
}

function drawMain(chart) {
    const at = i => chart.first + chart.step * i;
    let out = '';

    chart.candles.forEach(row => {
        const [i, kind, top, bottom, high, low] = row.split(' ').map((v, n) => n === 1 ? v : Number(v));
        const x = Math.round(at(i));
        const half = (chart.body - 1) / 2;
        if (kind === 'f') {
            out += `<rect x="${x - half}" y="${top}" width="${chart.body - 1}" height="1" fill="#fff"/>`;
            return;
        }
        const color = kind === 'u' ? RED : CYAN;
        if (high < top) out += `<path d="M${x + .5} ${high}V${top}" stroke="${color}"/>`;
        if (low > bottom) out += `<path d="M${x + .5} ${bottom}V${low}" stroke="${color}"/>`;
        if (kind === 'u') {
            out += `<rect x="${x - half + .5}" y="${top + .5}" width="${chart.body - 1}" height="${bottom - top - .5}" fill="none" stroke="${color}"/>`;
        } else {
            out += `<rect x="${x - half}" y="${top}" width="${chart.body}" height="${bottom - top}" fill="${color}"/>`;
        }
    });

    chart.lines.forEach(([c, w, points]) => out += polyline(points, COLORS[c], w));
    chart.crosses.forEach(([c, from, list]) => out += drawCrosses(at, COLORS[c], from, list, true));
    chart.loose.forEach(([c, from, list]) => out += drawCrosses(at, c, from, list, false));

    chart.dots.split(' ').forEach((v, n) => {
        const isCyan = v[0] === 'c';
        out += `<circle cx="${at(chart.dotsFrom + n)}" cy="${isCyan ? v.slice(1) : v}" r="2.7" fill="${isCyan ? '#0ff' : '#ff0'}"/>`;
    });

    if (chart.specks) {
        const [x1, y1, x2, y2] = chart.specks;
        for (let x = x1; x <= x2; x += 10.03) {
            const y = Math.round(y1 + (y2 - y1) * (x - x1) / (x2 - x1));
            out += `<rect x="${Math.round(x)}" y="${y}" width="1" height="1" fill="#0ff"/>`;
        }
    }

    chart.notes.forEach(([text, x, y, arrow]) => {
        const [, tip] = arrow.split(' ');
        const [tx, ty] = tip.split(',').map(Number);
        const back = x < tx ? -5 : 5;
        out += `<text x="${x}" y="${y}" fill="#c0c0c0" ${FONT}>${text}</text>`;
        out += polyline(arrow, '#c0c0c0', 1);
        out += polyline(`${tx + back},${ty - 3} ${tx},${ty} ${tx + back},${ty + 4}`, '#c0c0c0', 1);
    });
    return out;
}

function drawCrosses(at, color, from, list, joined) {
    const ys = list.split(' ').map(Number);
    let out = '';
    if (joined) out += polyline(ys.map((y, n) => `${at(from + n)},${y}`).join(' '), color, 1);
    ys.forEach((y, n) => out += cross(Math.round(at(from + n)), y, color));
    return out;
}

function drawHands(chart, top, height) {
    return chart.hands.filter(h => h[1] > top && h[1] < top + height).map(([x, y, flip]) =>
        `<use href="#hand" width="14" height="16" transform="translate(${x} ${y + (flip ? 14 : 0)}) scale(1 ${flip ? -1 : 1})"/>`).join('');
}

function drawKd(chart) {
    const at = i => chart.first + chart.step * i;
    const end = at(chart.stems.split(' ').length - 1);
    let out = '';
    chart.bounds.forEach(y => out += `<path d="M${chart.first} ${y + .5}H${end}" stroke="#fff" stroke-dasharray="3 3"/>`);
    chart.bands.forEach(([c, w, points]) => out += polyline(points, COLORS[c], w));
    chart.kd.forEach(([c, from, list]) => out += drawCrosses(at, COLORS[c], from, list, true));
    chart.j.forEach(([c, from, list]) => {
        const ys = list.split(' ').map(Number);
        out += polyline(ys.map((y, n) => `${at(from + n)},${y}`).join(' '), c === 'm' ? '#ff2080' : '#0ff', 1);
        ys.forEach((y, n) => out += `<circle cx="${at(from + n)}" cy="${y}" r="2.7" fill="${COLORS[c]}"/>`);
    });
    return out + drawHands(chart, ...chart.panels[1]);
}

function drawBars(chart) {
    const at = i => Math.round(chart.first + chart.step * i);
    const stems = chart.stems.split(' ');
    let out = '';
    stems.forEach((s, i) => {
        const y = Number(s.slice(1));
        out += `<path d="M${at(i) + .5} ${chart.zero}V${y}" stroke="${y < chart.zero ? RED : CYAN}"/>`;
    });
    chart.bars.split(' ').forEach((s, i) => {
        const [top, bottom] = s.slice(1).split(',').map(Number);
        out += `<rect x="${at(i) - (chart.bar - 1) / 2}" y="${top}" width="${chart.bar}" height="${bottom - top}" fill="${COLORS[s[0]]}"/>`;
    });
    out += `<path d="M${chart.first} ${chart.zero + .5}H${at(stems.length - 1)}" stroke="#fff"/>`;
    stems.forEach((s, i) => {
        if (s[0] === 'x') return;
        const y = Number(s.slice(1));
        out += `<circle cx="${at(i)}" cy="${y}" r="2.7" fill="${COLORS[s[0]]}"/><path d="M${at(i)} ${y + 1}l2 -2" stroke="#fff"/>`;
    });
    chart.signals.forEach(([kind, i, y]) => {
        const x = at(i);
        out += kind === 'u'
            ? `<path d="M${x} ${y}l5 6h-4v6h-2v-6h-4z" fill="#f00"/>`
            : `<path d="M${x} ${y + 12}l5 -6h-4v-6h-2v6h-4z" fill="#00e000"/>`;
    });
    return out + drawHands(chart, ...chart.panels[2]);
}

function drawAxis(labels) {
    return labels.map(([y, text]) =>
        `<path d="M0 ${y + .5}h4" stroke="${LINE}"/><text x="46" y="${y + 7}" text-anchor="end" fill="${RED}" ${FONT}>${text}</text>`).join('');
}

function fill(svg, box, content) {
    svg.setAttribute('viewBox', box.join(' '));
    svg.setAttribute('preserveAspectRatio', 'none');
    svg.setAttribute('shape-rendering', 'crispEdges');
    svg.innerHTML = content;
}

document.querySelectorAll('.plots').forEach(plots => {
    const chart = charts[plots.dataset.chart];
    const draws = [drawMain, drawKd, drawBars];
    const axes = [chart.priceAxis, chart.kdAxis, chart.barAxis];

    plots.querySelectorAll('.panel').forEach((panel, n) => {
        const [top, height] = chart.panels[n];
        fill(panel.querySelector('.draw'), [chart.left, top + 27, 421, height - 27], draws[n](chart));
        // the selected axis has a frame, so its drawing area is smaller
        const box = n === 2 ? [1, top + 2, 48, height - 4] : [0, top + 1, 51, height - 1];
        fill(panel.querySelector('.axis'), box, drawAxis(axes[n]));
    });

    let times = `<text x="${chart.first}" y="${chart.timeTop + 19}" fill="${RED}" font-weight="bold" ${FONT}>${chart.date}</text>`;
    chart.hours.forEach(([x, text]) => {
        times += `<path d="M${x - 1.5} ${chart.timeTop}v16" stroke="${LINE}"/>`;
        times += `<text x="${x}" y="${chart.timeTop + 19}" fill="${RED}" ${FONT}>${text}</text>`;
    });
    fill(plots.parentNode.querySelector('.hours'), [chart.left, chart.timeTop, 421, 15], times);
});

// intraday chart of the index

const average = [488,772,500,718,507,670,515,640,530,650,538,652,550,615,560,622,575,612,590,600,598,595,610,600,622,603,638,608,645,595,665,583,675,575,685,560,705,566,730,554,750,560,768,570,780,545,793,522,810,526,835,543,855,530,870,545,880,562,897,562,905,550,920,550,937,541,948,560,962,610,980,622,1005,625,1020,655,1030,650,1052,670,1058,637,1080,633,1098,628,1120,633,1158,640,1170,655,1182,665,1203,662,1212,685,1225,683,1242,706,1262,683,1275,645,1295,648,1300,660,1325,655,1355,637,1383,640];
const price = [485,790,490,810,497,768,510,790,517,730,530,775,540,745,552,716,560,735,580,740,596,725,603,755,618,770,635,785,645,812,655,780,675,795,685,765,712,775,730,768,750,785,768,797,780,760,790,725,805,735,833,768,850,760,857,745,880,790,905,772,935,775,950,810,960,850,978,868,995,858,1010,870,1020,900,1035,900,1050,918,1060,880,1080,885,1098,873,1110,878,1135,878,1160,890,1170,912,1190,908,1200,908,1215,925,1230,940,1242,957,1260,935,1272,890,1290,885,1298,910,1320,908,1350,880,1370,886,1383,880];

function noise(n) {
    const v = Math.sin(n * 12.9898) * 43758.5453;
    return v - Math.floor(v);
}

// fills the gaps between the known points with small moves
function trace(data, jitter) {
    const points = [];
    for (let i = 0; i < data.length - 2; i += 2) {
        const [x1, y1, x2, y2] = data.slice(i, i + 4);
        for (let x = x1; x < x2; x += 4) {
            const y = y1 + (y2 - y1) * (x - x1) / (x2 - x1) + (noise(x) - .5) * jitter;
            points.push(`${(1280 + x / 2.45).toFixed(1)},${(y / 3).toFixed(1)}`);
        }
    }
    return points.join(' ');
}

function drawIndex() {
    const rows = [78, 94, 111, 128, 146, 163, 180, 199, 215, 232, 250, 267, 285, 302];
    const labels = [3537, 3526, 3516, 3505, 3495, 3484, 3474, 3463, 3453, 3442, 3431, 3421, 3410, 3400];
    const percents = ['2.13%', '1.83%', '1.52%', '1.22%', '0.91%', '0.61%', '0.30%', '0.00%', '0.30%', '0.61%', '0.91%', '1.22%', '1.52%', '1.83%'];
    let out = '';

    rows.forEach((y, i) => {
        const color = i < 7 ? RED : i === 7 ? '#fff' : '#00e600';
        const base = 89 + Math.round(i * 17.3);
        out += `<path d="M1478 ${y + .5}H1844" stroke="${LINE}" stroke-width="${i === 7 ? 2 : 1}"/>`;
        out += `<text x="1474" y="${base}" text-anchor="end" fill="${color}" ${FONT}>${labels[i]}</text>`;
        out += `<text x="1847" y="${base}" fill="${color}" ${FONT}>${percents[i]}</text>`;
    });
    out += `<path d="M1423 320.500H1895M1844.500 57V338M1478.500 78V320M1660.500 78V320" stroke="${LINE}" fill="none"/>`;
    [1524, 1570, 1616, 1708, 1753, 1799].forEach(x => out += `<path d="M${x + .5} 78V320" stroke="${LINE}" stroke-dasharray="1 3"/>`);

    // volume strength: [from, to, tallest red above zero, deepest green under it]
    [[1480, 1492, 30, 5], [1492, 1508, 22, 24], [1508, 1530, 20, 18], [1530, 1555, 24, 18], [1555, 1600, 20, 16], [1600, 1604, 36, 5],
        [1604, 1635, 20, 18], [1635, 1662, 24, 14], [1662, 1682, 5, 38], [1682, 1710, 6, 30], [1710, 1722, 32, 4], [1722, 1745, 16, 14],
        [1745, 1772, 12, 24], [1772, 1788, 12, 28], [1788, 1802, 38, 4], [1802, 1812, 14, 14], [1812, 1843, 22, 0]].forEach(([from, to, up, down]) => {
        for (let x = from; x < to; x++) {
            const upper = x % 2 && noise(x) > .2 ? Math.pow(noise(x + 7), 1.4) * up : 2;
            const lower = noise(x + 3) > .5 ? Math.pow(noise(x + 11), 1.1) * down : 0;
            out += `<rect x="${x}" y="${198 - Math.round(upper)}" width="1" height="${Math.round(upper)}" fill="${RED}"/>`;
            if (lower > 1) out += `<rect x="${x}" y="200" width="1" height="${Math.round(lower)}" fill="#00e600"/>`;
        }
    });
    out += `<path d="M1638.500 200V234M1671.500 200V239" stroke="#00e600"/><path d="M1712.500 163V198M1599.500 164V198M1797.500 162V198M1557.500 168V198" stroke="${RED}"/>`;

    out += polyline(trace(average, 4), '#ffff00', 1) + polyline(trace(price, 12), '#ffffff', 1);
    out += `<text x="1480" y="78" fill="#c0c0c0" font-weight="300" ${FONT}>上证指数</text>`;
    out += `<text x="1579" y="78" fill="#00e600" ${FONT}>3404.66 -1.69%</text><path d="M1735 64h15l-7 14z" fill="#00e600"/>`;
    out += `<text x="1753" y="78" fill="#00e600" ${FONT}>-58.41</text>`;
    [[1515, '10:30'], [1609, '13:00'], [1700, '14:00'], [1790, '15:00']].forEach(([x, t]) => {
        out += `<text x="${x}" y="339" fill="${RED}" ${FONT}>${t}</text>`;
    });
    return out;
}

const indexChart = document.querySelector('.index-chart');
indexChart.setAttribute('shape-rendering', 'crispEdges');
indexChart.innerHTML = drawIndex();
```
